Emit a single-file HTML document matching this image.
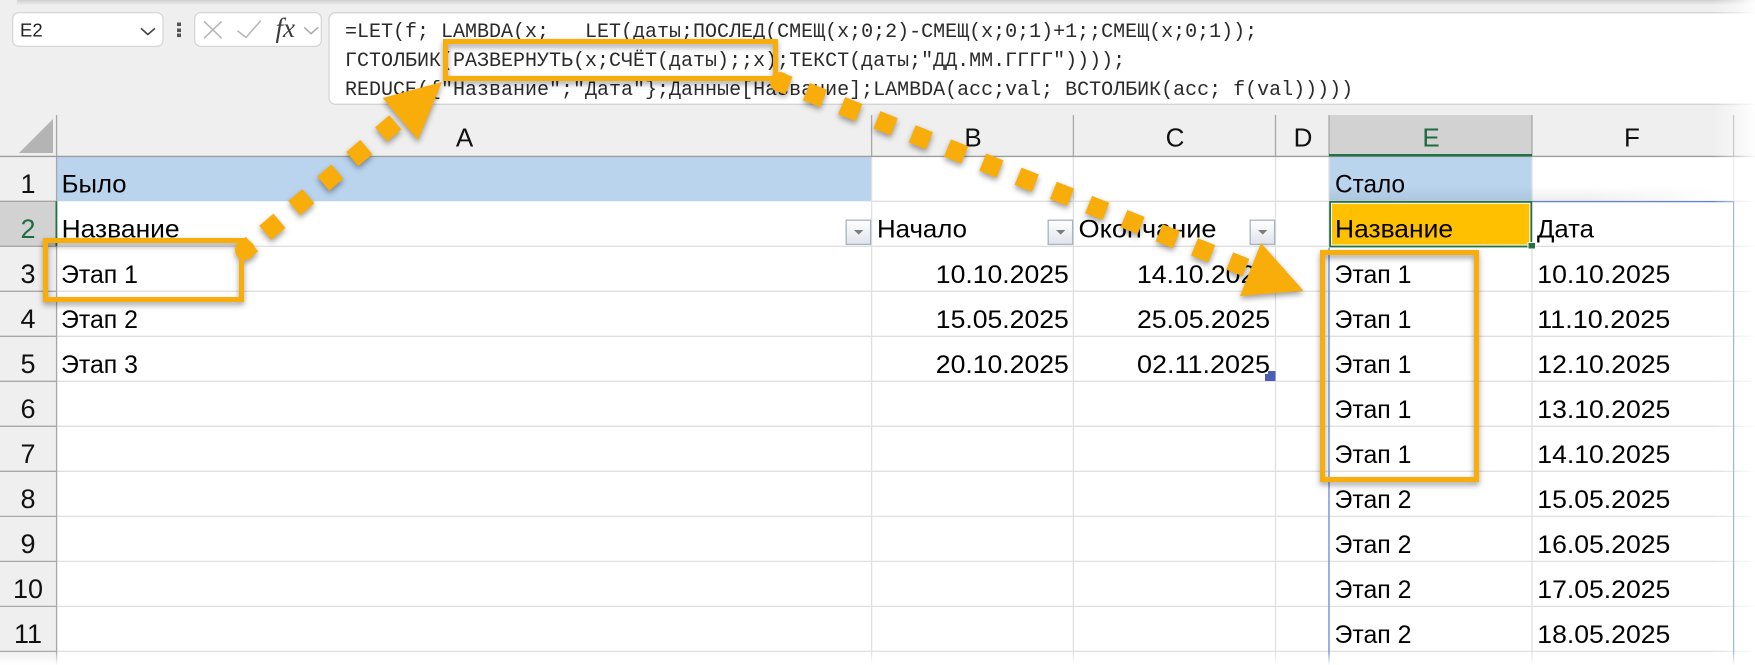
<!DOCTYPE html>
<html lang="ru">
<head>
<meta charset="utf-8">
<title>Excel</title>
<style>
html,body{margin:0;padding:0;background:#fff;width:1755px;height:665px;overflow:hidden}
svg{display:block;position:absolute;left:0;top:0}
text{font-family:"Liberation Sans","Noto Sans CJK SC",sans-serif;fill:#000;white-space:pre}
.c{font-size:25px}
.m{font-family:"Liberation Mono","DejaVu Sans Mono",monospace;font-size:20px;fill:#2a2a2a}
.r{font-size:27px;text-anchor:middle;fill:#111}
.h{font-size:26px;text-anchor:middle;fill:#111}
.g{stroke:#e0e0e0;stroke-width:1.3;fill:none}
.hd{stroke:#a8a8a8;stroke-width:1.3;fill:none}
.fb{fill:url(#btn);stroke:#a9b3c1;stroke-width:1.3}
.tr{fill:#7c7c7c}
.o{fill:none;stroke:#f9ad0a;stroke-width:5}
.d{fill:none;stroke:#f9ad0a;stroke-width:18.6}
</style>
</head>
<body>
<svg width="1755" height="665" viewBox="0 0 1755 665" xmlns="http://www.w3.org/2000/svg">
<defs>
<linearGradient id="btn" x1="0" y1="0" x2="0" y2="1"><stop offset="0" stop-color="#fff"/><stop offset="1" stop-color="#dfe4eb"/></linearGradient>
<linearGradient id="top" x1="0" y1="0" x2="0" y2="1"><stop offset="0" stop-color="#cfcfcf"/><stop offset="1" stop-color="#efefef"/></linearGradient>
<linearGradient id="fr" x1="0" y1="0" x2="1" y2="0"><stop offset="0" stop-color="#fff" stop-opacity="0"/><stop offset="0.5" stop-color="#fff" stop-opacity=".4"/><stop offset="1" stop-color="#fff" stop-opacity=".95"/></linearGradient>
<linearGradient id="fb" x1="0" y1="0" x2="0" y2="1"><stop offset="0" stop-color="#fff" stop-opacity="0"/><stop offset="1" stop-color="#fff" stop-opacity="1"/></linearGradient>
<linearGradient id="sh" x1="0" y1="0" x2="0" y2="1"><stop offset="0" stop-color="#000" stop-opacity="0"/><stop offset="1" stop-color="#000" stop-opacity=".07"/></linearGradient>
<linearGradient id="shm" gradientUnits="userSpaceOnUse" x1="1329" y1="0" x2="1725" y2="0"><stop offset="0" stop-color="#fff"/><stop offset=".65" stop-color="#fff"/><stop offset="1" stop-color="#000"/></linearGradient>
<mask id="shmask" maskUnits="userSpaceOnUse" x="1329" y="180" width="426" height="30"><rect x="1329" y="180" width="426" height="30" fill="url(#shm)"/></mask>
</defs>

<!-- chrome -->
<rect x="0" y="0" width="1755" height="157" fill="#efefef"/>
<rect x="17" y="0" width="1738" height="5" fill="url(#top)"/>
<rect x="12.7" y="12.7" width="150.3" height="33.6" rx="6" fill="#fff" stroke="#d4d4d4" stroke-width="1.2"/>
<text x="20" y="36.5" style="font-size:18.5px;fill:#222">E2</text>
<path d="M141 28.3L147.8 34.5L155 28.3" fill="none" stroke="#444" stroke-width="1.6"/>
<rect x="177" y="22.5" width="4" height="3.6" fill="#555"/><rect x="177" y="28.5" width="4" height="3.6" fill="#555"/><rect x="177" y="33.5" width="4" height="3.6" fill="#555"/>
<rect x="194.7" y="12.7" width="126.6" height="33.6" rx="6" fill="#fff" stroke="#d4d4d4" stroke-width="1.2"/>
<path d="M204 21.3L221.7 38.3M221.7 21.3L204 38.3" fill="none" stroke="#b5b5b5" stroke-width="1.5"/>
<path d="M237.3 30.7L246 37.5L260.7 20.7" fill="none" stroke="#b5b5b5" stroke-width="1.5"/>
<text x="275.5" y="37" style="font-family:'Liberation Serif',serif;font-style:italic;font-size:27px;fill:#3c3c3c">fx</text>
<path d="M304.3 27.3L311 33.7L318.3 27.3" fill="none" stroke="#aaa" stroke-width="1.5"/>
<path d="M1760 12.7H335.5a6.5 6.5 0 0 0-6.5 6.5V97.8a6.5 6.5 0 0 0 6.5 6.5H1760Z" fill="#fff" stroke="#d4d4d4" stroke-width="1.3"/>
<text class="m" x="345" y="37">=LET(f; LAMBDA(x;   LET(даты;ПОСЛЕД(СМЕЩ(x;0;2)-СМЕЩ(x;0;1)+1;;СМЕЩ(x;0;1));</text>
<text class="m" x="345" y="66">ГСТОЛБИК(РАЗВЕРНУТЬ(x;СЧЁТ(даты);;x);ТЕКСТ(даты;"ДД.ММ.ГГГГ"))));</text>
<text class="m" x="345" y="95">REDUCE({"Название";"Дата"};Данные[Название];LAMBDA(acc;val; ВСТОЛБИК(acc; f(val)))))</text>

<!-- sheet -->
<rect x="57" y="157" width="1698" height="508" fill="#fff"/>
<rect x="0" y="157" width="56.5" height="508" fill="#efefef"/>
<rect x="0" y="201.3" width="56.5" height="45" fill="#d2d2d2"/>
<rect x="1329" y="115" width="203" height="40" fill="#d2d2d2"/>
<polygon points="19,153 53,119 53,153" fill="#b4b4b4"/>
<rect x="57" y="157" width="814.5" height="44.3" fill="#bad4ee"/>
<rect x="1329" y="157" width="203" height="44.3" fill="#bad4ee"/>

<!-- grid -->
<path class="g" d="M871.6 157V665M1073.4 157V665M1275.5 157V665M1329 157V665M1532 157V665M1733.6 157V665"/>
<path class="g" d="M871 201.3H1755M57 246.3H1755M57 291.3H1755M57 336.3H1755M57 381.3H1755M57 426.3H1755M57 471.3H1755M57 516.4H1755M57 561.4H1755M57 606.4H1755M57 651.4H1755"/>
<path class="hd" d="M0 201.3H56M0 246.3H56M0 291.3H56M0 336.3H56M0 381.3H56M0 426.3H56M0 471.3H56M0 516.4H56M0 561.4H56M0 606.4H56M0 651.4H56"/>
<path class="hd" d="M56.6 115V665M871.6 115V156M1073.4 115V156M1275.5 115V156M1329 115V156M1532 115V156M1733.6 115V156" />
<path d="M0 156.4H1755" stroke="#9e9e9e" stroke-width="1.4" fill="none"/>
<rect x="1329" y="154" width="203" height="2.4" fill="#217346"/>
<rect x="55.5" y="201.3" width="1.8" height="45" fill="#217346"/>
<rect x="1329" y="186" width="426" height="15" fill="url(#sh)" mask="url(#shmask)"/>

<!-- table border -->
<path d="M1532 201.6H1733.6V665M1329 248V665" fill="none" stroke="#5f86d2" stroke-width="1.2"/>

<!-- headers -->
<text class="h" x="464.6" y="146.7">A</text>
<text class="h" x="973" y="146.7">B</text>
<text class="h" x="1175" y="146.7">C</text>
<text class="h" x="1303" y="146.7">D</text>
<text class="h" x="1431" y="146.7" style="fill:#1f6b43">E</text>
<text class="h" x="1632" y="146.7">F</text>

<text class="r" x="28" y="193.2">1</text>
<text class="r" x="28" y="238.2" style="fill:#1f6b43">2</text>
<text class="r" x="28" y="283">3</text>
<text class="r" x="28" y="328">4</text>
<text class="r" x="28" y="373">5</text>
<text class="r" x="28" y="418">6</text>
<text class="r" x="28" y="463">7</text>
<text class="r" x="28" y="508">8</text>
<text class="r" x="28" y="553">9</text>
<text class="r" x="28" y="598">10</text>
<text class="r" x="28" y="643">11</text>

<!-- E2 selection -->
<rect x="1329.2" y="201" width="203" height="46.4" fill="#217346"/>
<rect x="1331" y="202.8" width="199.4" height="42.8" fill="#fff"/>
<rect x="1332" y="203.8" width="197.4" height="40.8" fill="#ffc000"/>
<rect x="1527.5" y="242" width="8" height="7" fill="#fff"/>
<rect x="1528.5" y="243" width="6.5" height="5.5" fill="#217346"/>

<!-- cells -->
<text class="c" x="61.6" y="192.7" textLength="65" lengthAdjust="spacingAndGlyphs">Было</text>
<text class="c" x="61.6" y="237.7" textLength="118" lengthAdjust="spacingAndGlyphs">Название</text>
<text class="c" x="877" y="237.7" textLength="90" lengthAdjust="spacingAndGlyphs">Начало</text>
<text class="c" x="1078.5" y="237.7" textLength="138" lengthAdjust="spacingAndGlyphs">Окончание</text>
<text class="c" x="61" y="282.8" textLength="77" lengthAdjust="spacingAndGlyphs">Этап 1</text>
<text class="c" x="61" y="327.8" textLength="77" lengthAdjust="spacingAndGlyphs">Этап 2</text>
<text class="c" x="61" y="372.8" textLength="77" lengthAdjust="spacingAndGlyphs">Этап 3</text>

<text class="c" x="935.8" y="282.8" textLength="133" lengthAdjust="spacingAndGlyphs">10.10.2025</text>
<text class="c" x="935.8" y="327.8" textLength="133" lengthAdjust="spacingAndGlyphs">15.05.2025</text>
<text class="c" x="935.8" y="372.8" textLength="133" lengthAdjust="spacingAndGlyphs">20.10.2025</text>
<text class="c" x="1137" y="282.8" textLength="133" lengthAdjust="spacingAndGlyphs">14.10.2025</text>
<text class="c" x="1137" y="327.8" textLength="133" lengthAdjust="spacingAndGlyphs">25.05.2025</text>
<text class="c" x="1137" y="372.8" textLength="133" lengthAdjust="spacingAndGlyphs">02.11.2025</text>

<text class="c" x="1335" y="192.7" textLength="70" lengthAdjust="spacingAndGlyphs">Стало</text>
<text class="c" x="1335" y="237.7" textLength="118" lengthAdjust="spacingAndGlyphs">Название</text>
<text class="c" x="1537" y="237.7" textLength="57" lengthAdjust="spacingAndGlyphs">Дата</text>

<text class="c" x="1334.5" y="282.8" textLength="77" lengthAdjust="spacingAndGlyphs">Этап 1</text>
<text class="c" x="1334.5" y="327.8" textLength="77" lengthAdjust="spacingAndGlyphs">Этап 1</text>
<text class="c" x="1334.5" y="372.8" textLength="77" lengthAdjust="spacingAndGlyphs">Этап 1</text>
<text class="c" x="1334.5" y="417.8" textLength="77" lengthAdjust="spacingAndGlyphs">Этап 1</text>
<text class="c" x="1334.5" y="462.8" textLength="77" lengthAdjust="spacingAndGlyphs">Этап 1</text>
<text class="c" x="1334.5" y="507.8" textLength="77" lengthAdjust="spacingAndGlyphs">Этап 2</text>
<text class="c" x="1334.5" y="552.8" textLength="77" lengthAdjust="spacingAndGlyphs">Этап 2</text>
<text class="c" x="1334.5" y="597.8" textLength="77" lengthAdjust="spacingAndGlyphs">Этап 2</text>
<text class="c" x="1334.5" y="642.8" textLength="77" lengthAdjust="spacingAndGlyphs">Этап 2</text>

<text class="c" x="1537.3" y="282.8" textLength="133" lengthAdjust="spacingAndGlyphs">10.10.2025</text>
<text class="c" x="1537.3" y="327.8" textLength="133" lengthAdjust="spacingAndGlyphs">11.10.2025</text>
<text class="c" x="1537.3" y="372.8" textLength="133" lengthAdjust="spacingAndGlyphs">12.10.2025</text>
<text class="c" x="1537.3" y="417.8" textLength="133" lengthAdjust="spacingAndGlyphs">13.10.2025</text>
<text class="c" x="1537.3" y="462.8" textLength="133" lengthAdjust="spacingAndGlyphs">14.10.2025</text>
<text class="c" x="1537.3" y="507.8" textLength="133" lengthAdjust="spacingAndGlyphs">15.05.2025</text>
<text class="c" x="1537.3" y="552.8" textLength="133" lengthAdjust="spacingAndGlyphs">16.05.2025</text>
<text class="c" x="1537.3" y="597.8" textLength="133" lengthAdjust="spacingAndGlyphs">17.05.2025</text>
<text class="c" x="1537.3" y="642.8" textLength="133" lengthAdjust="spacingAndGlyphs">18.05.2025</text>

<!-- filter buttons -->
<rect class="fb" x="846.2" y="220.2" width="24.4" height="24.2"/><polygon class="tr" points="854,230 863.4,230 858.7,234.6"/>
<rect class="fb" x="1048.2" y="220.2" width="24.4" height="24.2"/><polygon class="tr" points="1056,230 1065.4,230 1060.7,234.6"/>
<rect class="fb" x="1250.2" y="220.2" width="24.4" height="24.2"/><polygon class="tr" points="1258,230 1267.4,230 1262.7,234.6"/>

<!-- table resize handle -->
<polygon points="1268,371 1275.5,371 1275.5,381 1265,381 1265,374 1268,374" fill="#4c5fb5"/>

<!-- annotations -->
<g style="filter:drop-shadow(0 3px 3px rgba(0,0,0,.38))">
  <rect class="o" x="45.5" y="240.5" width="196" height="59"/>
  <rect class="o" x="445.5" y="41.5" width="330" height="37"/>
  <rect class="o" x="1322.5" y="252.5" width="154" height="227"/>
  <circle cx="245" cy="250" r="10" fill="#f9ad0a"/>
  <path d="M245 250L252 244" stroke="#f9ad0a" stroke-width="19" fill="none"/>
  <path class="d" d="M265.3 232.8L395.6 122.2" stroke-dasharray="18.6 19.4"/>
  <polygon points="382.7,98 442,82 418,140" fill="#f9ad0a"/>
  <circle cx="780" cy="82" r="10" fill="#f9ad0a"/>
  <path d="M780 82L789 85.6" stroke="#f9ad0a" stroke-width="19" fill="none"/>
  <path class="d" d="M806.4 91.55L1245.9 267.45" stroke-dasharray="18.6 19.4"/>
  <polygon points="1261,243 1303.5,290.7 1240,296" fill="#f9ad0a"/>
</g>

<!-- edge fades -->
<rect x="1712" y="0" width="43" height="665" fill="url(#fr)"/>
<rect x="0" y="651.5" width="1755" height="13.5" fill="url(#fb)"/>
</svg>
</body>
</html>
